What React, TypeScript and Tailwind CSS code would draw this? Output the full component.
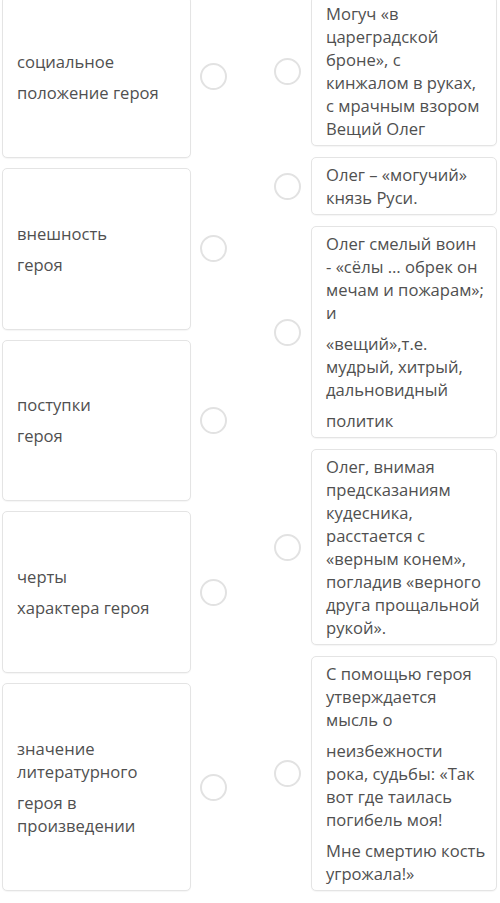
const leftItems: string[][][] = [
  [["социальное"], ["положение героя"]],
  [["внешность"], ["героя"]],
  [["поступки"], ["героя"]],
  [["черты"], ["характера героя"]],
  [["значение", "литературного"], ["героя в", "произведении"]],
];

const rightItems: string[][][] = [
  [["Могуч «в", "цареградской", "броне», с", "кинжалом в руках,", "с мрачным взором", "Вещий Олег"]],
  [["Олег – «могучий»", "князь Руси."]],
  [
    ["Олег смелый воин", "- «сёлы … обрек он", "мечам и пожарам»;", "и"],
    ["«вещий»,т.е.", "мудрый, хитрый,", "дальновидный"],
    ["политик"],
  ],
  [["Олег, внимая", "предсказаниям", "кудесника,", "расстается с", "«верным конем»,", "погладив «верного", "друга прощальной", "рукой»."]],
  [
    ["С помощью героя", "утверждается", "мысль о"],
    ["неизбежности", "рока, судьбы: «Так", "вот где таилась", "погибель моя!"],
    ["Мне смертию кость", "угрожала!»"],
  ],
];

function Circle() {
  return <div className="w-[27px] h-[27px] shrink-0 rounded-full border-2 border-[#e2e2e2] bg-white" />;
}

function Text({ paras }: { paras: string[][] }) {
  return (
    <div className="flex flex-col gap-2">
      {paras.map((lines, i) => (
        <p key={i} className="whitespace-nowrap">
          {lines.map((l, j) => (
            <span key={j} className="block">
              {l}
            </span>
          ))}
        </p>
      ))}
    </div>
  );
}

export default function App() {
  return (
    <div
      className="w-[500px] h-[903px] overflow-hidden bg-white text-[16.6px] leading-[23px] text-[#505050]"
      style={{ fontFamily: '"Open Sans", "Noto Sans", sans-serif' }}
    >
      <div className="-mt-1 flex">
        {/* left column */}
        <div className="ml-[2px] w-[225px] flex flex-col gap-[10px]">
          {leftItems.map((paras, i) => (
            <div key={i} className="flex-auto flex items-stretch">
              <div className="w-[189px] flex flex-col justify-center rounded-[5px] border border-[#e4e4e4] bg-white px-[14px] py-[6px] shadow-[0_1px_1px_rgba(0,0,0,0.04)]">
                <Text paras={paras} />
              </div>
              <div className="ml-[9px] self-center">
                <Circle />
              </div>
            </div>
          ))}
        </div>

        {/* right column */}
        <div className="ml-[47px] flex flex-col gap-[11px]">
          {rightItems.map((paras, i) => (
            <div key={i} className="flex items-center">
              <Circle />
              <div className="ml-[10px] w-[186px] rounded-[5px] border border-[#e4e4e4] bg-white pl-[14px] pr-[4px] py-[5px] shadow-[0_1px_1px_rgba(0,0,0,0.04)]">
                <Text paras={paras} />
              </div>
            </div>
          ))}
        </div>
      </div>
    </div>
  );
}
